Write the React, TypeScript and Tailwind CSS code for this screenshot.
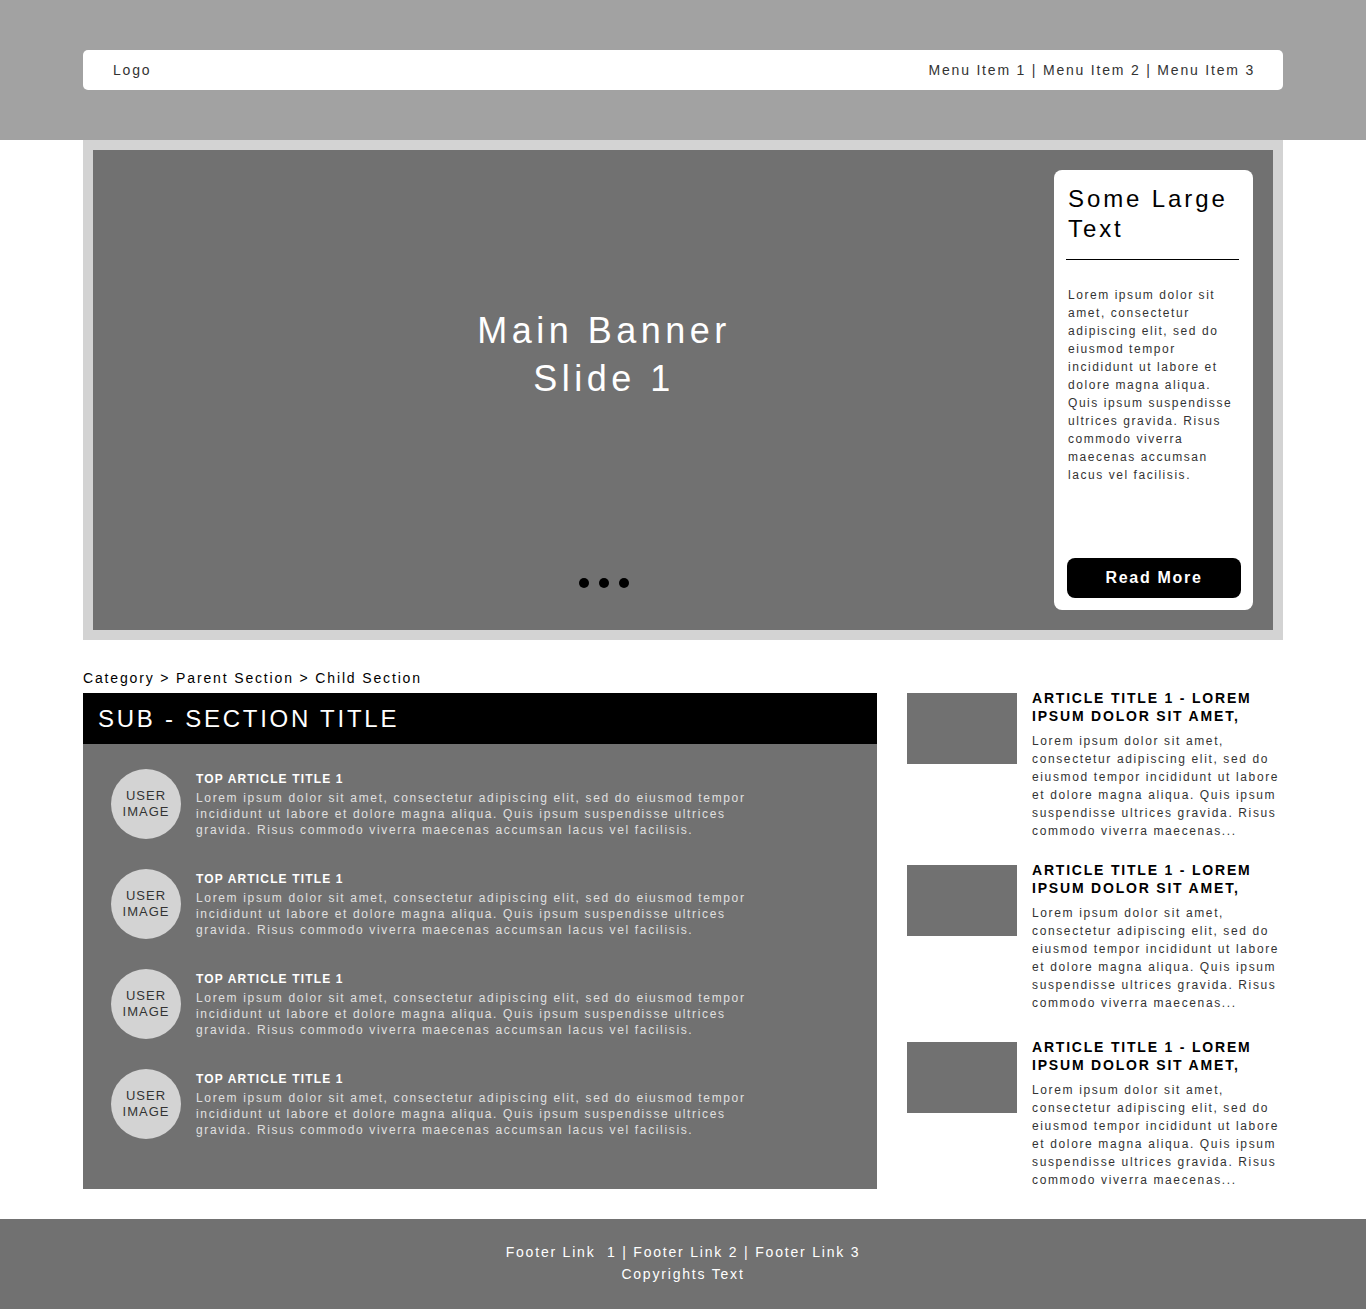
import React from "react";

const cardLines = [
  "Lorem ipsum dolor sit",
  "amet, consectetur",
  "adipiscing elit, sed do",
  "eiusmod tempor",
  "incididunt ut labore et",
  "dolore magna aliqua.",
  "Quis ipsum suspendisse",
  "ultrices gravida. Risus",
  "commodo viverra",
  "maecenas accumsan",
  "lacus vel facilisis.",
];

const topLines = [
  "Lorem ipsum dolor sit amet, consectetur adipiscing elit, sed do eiusmod tempor",
  "incididunt ut labore et dolore magna aliqua. Quis ipsum suspendisse ultrices",
  "gravida. Risus commodo viverra maecenas accumsan lacus vel facilisis.",
];

const sideLines = [
  "Lorem ipsum dolor sit amet,",
  "consectetur adipiscing elit, sed do",
  "eiusmod tempor incididunt ut labore",
  "et dolore magna aliqua. Quis ipsum",
  "suspendisse ultrices gravida. Risus",
  "commodo viverra maecenas...",
];

const sideMargins = ["mt-0", "mt-[21px]", "mt-[26px]"];

export default function App() {
  return (
    <div
      className="bg-white min-h-[1309px]"
      style={{ fontFamily: '"Liberation Sans", Arial, Helvetica, sans-serif' }}
    >
      {/* Header */}
      <header className="bg-[#a2a2a2] h-[140px] pt-[50px]">
        <nav className="mx-auto w-[1200px] h-10 bg-white rounded-[5px] flex items-center justify-between pl-[30px] pr-[28px] text-[14px] tracking-[1.8px] text-[#333]">
          <span>Logo</span>
          <span>Menu Item 1 | Menu Item 2 | Menu Item 3</span>
        </nav>
      </header>

      {/* Banner */}
      <section className="mx-auto w-[1200px] bg-[#d3d3d3] p-[10px]">
        <div className="bg-[#717171] h-[480px] flex">
          <div className="flex-1 flex flex-col items-center justify-between pl-[61px] pt-[157px] pb-[42px]">
            <h1 className="text-white text-[36px] leading-[48px] tracking-[4.5px] text-center">
              Main Banner
              <br />
              Slide 1
            </h1>
            <div className="flex gap-[10px]">
              <span className="block w-[10px] h-[10px] rounded-full bg-black" />
              <span className="block w-[10px] h-[10px] rounded-full bg-black" />
              <span className="block w-[10px] h-[10px] rounded-full bg-black" />
            </div>
          </div>
          <aside className="my-[20px] mr-[20px] w-[199px] bg-white rounded-lg flex flex-col px-3 pt-[14px] pb-3">
            <h2 className="pl-[2px] text-[24px] leading-[30px] tracking-[2.9px] text-black">
              Some Large
              <br />
              Text
            </h2>
            <div className="mt-[15px] h-px bg-black mr-[2px]" />
            <div className="mt-[26px] pl-[2px] text-[12px] leading-[18px] tracking-[1.55px] text-[#333]">
              {cardLines.map((l) => (
                <div key={l} className="whitespace-nowrap">
                  {l}
                </div>
              ))}
            </div>
            <button className="mt-auto ml-[1px] h-10 rounded-lg bg-black text-white text-[16px] font-bold tracking-[1.7px]">
              Read More
            </button>
          </aside>
        </div>
      </section>

      {/* Main content */}
      <main className="mx-auto w-[1200px] mt-[28px] flex">
        <div className="w-[794px]">
          <div className="text-[14px] leading-[20px] tracking-[1.85px] text-black mb-[5px]">
            Category &gt; Parent Section &gt; Child Section
          </div>
          <div className="bg-black h-[51px] flex items-center pl-[15px]">
            <h3 className="text-white text-[24px] tracking-[2.75px]">SUB - SECTION TITLE</h3>
          </div>
          <div className="bg-[#717171] pt-[25px] pb-[50px] pl-[28px] flex flex-col gap-[30px]">
            {[0, 1, 2, 3].map((i) => (
              <div key={i} className="flex items-start">
                <div className="w-[70px] h-[70px] rounded-full bg-[#d3d3d3] flex items-center justify-center text-center text-[13px] leading-[16px] tracking-[1px] text-[#333] shrink-0">
                  USER
                  <br />
                  IMAGE
                </div>
                <div className="ml-[15px] pt-[2px]">
                  <div className="text-white text-[12px] leading-[16px] font-bold tracking-[1.15px]">
                    TOP ARTICLE TITLE 1
                  </div>
                  <div className="mt-[3px] text-[#e0e0e0] text-[12px] leading-[16px] tracking-[1.65px]">
                    {topLines.map((l) => (
                      <div key={l} className="whitespace-nowrap">
                        {l}
                      </div>
                    ))}
                  </div>
                </div>
              </div>
            ))}
          </div>
        </div>

        <div className="flex-1 ml-[30px] pt-[21px]">
          {[0, 1, 2].map((i) => (
            <div key={i} className={`flex items-start ${sideMargins[i]}`}>
              <div className="w-[110px] h-[71px] mt-[4px] bg-[#717171] shrink-0" />
              <div className="ml-[15px]">
                <div className="text-black text-[14px] leading-[18px] font-bold tracking-[1.8px]">
                  ARTICLE TITLE 1 - LOREM
                  <br />
                  IPSUM DOLOR SIT AMET,
                </div>
                <div className="mt-[7px] text-[#333] text-[12px] leading-[18px] tracking-[1.63px]">
                  {sideLines.map((l) => (
                    <div key={l} className="whitespace-nowrap">
                      {l}
                    </div>
                  ))}
                </div>
              </div>
            </div>
          ))}
        </div>
      </main>

      {/* Footer */}
      <footer className="mt-[30px] bg-[#717171] h-[90px] pt-[22px] text-center text-white text-[14px] leading-[22px] tracking-[1.8px]">
        <div className="whitespace-pre">Footer Link  1 | Footer Link 2 | Footer Link 3</div>
        <div>Copyrights Text</div>
      </footer>
    </div>
  );
}
